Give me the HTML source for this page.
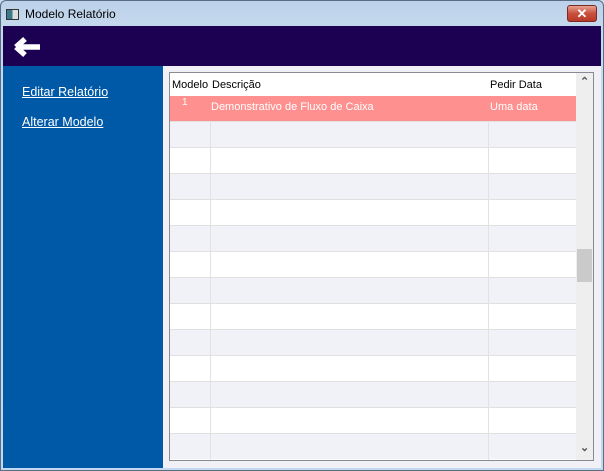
<!DOCTYPE html><html><head><style>
body{margin:0;width:604px;height:471px;position:relative;overflow:hidden;background:#c9dcf0;font-family:"Liberation Sans",sans-serif}
div{position:absolute;box-sizing:border-box}
.t{font-size:11px}
</style></head><body>
<div style="left:0;top:0;width:604px;height:471px;border:1px solid #5a6d84;border-radius:6px 6px 0 0;background:linear-gradient(#bcd2ea,#c6d9ee 30px,#c3d8ee)"></div>
<div style="left:6px;top:9px;width:13px;height:11px;border:1px solid #333;background:linear-gradient(90deg,#3a7a8a 50%,#ddd 50%)"></div>
<div style="left:25px;top:7px;font-size:12px;color:#000">Modelo Relatório</div>
<div style="left:567px;top:5px;width:30px;height:17px;border:1px solid #7a2a20;border-radius:3px;background:linear-gradient(#e8a090,#c8503c 50%,#b83a28);color:#fff;font-size:13px;font-weight:bold;text-align:center;line-height:15px">✕</div>
<div style="left:3px;top:26px;width:598px;height:40px;background:#1c0052"></div>
<svg style="position:absolute;left:13px;top:36px" width="28" height="22" viewBox="0 0 28 22"><path d="M3 11 L12 3 M3 11 L12 19 M4 11 H27" stroke="#fff" stroke-width="5.5" fill="none"/></svg>
<div style="left:3px;top:66px;width:160px;height:402px;background:#0059a6"></div>
<div style="left:163px;top:66px;width:438px;height:402px;background:#f0f0f6"></div>
<div style="left:22px;top:85px;color:#fff;font-size:12.5px;text-decoration:underline">Editar Relatório</div>
<div style="left:22px;top:115px;color:#fff;font-size:12.5px;text-decoration:underline">Alterar Modelo</div>
<div style="left:169px;top:72px;width:425px;height:389px;border:1px solid #8a8a92;background:#fff;overflow:hidden">
<div class="t" style="left:2px;top:6px">Modelo</div>
<div class="t" style="left:42px;top:6px">Descrição</div>
<div class="t" style="left:320px;top:6px">Pedir Data</div>
<div style="left:0;top:23px;width:406px;height:25px;background:#ff9090"></div>
<div class="t" style="left:12px;top:24px;color:#fff;font-size:10px">1</div>
<div class="t" style="left:41px;top:28px;color:#fff">Demonstrativo de Fluxo de Caixa</div>
<div class="t" style="left:320px;top:28px;color:#fff">Uma data</div>
<div id="rows"></div>
<div style="left:406px;top:0;width:17px;height:387px;background:#eeeeee"></div>
<div style="left:407px;top:176px;width:15px;height:33px;background:#cacaca"></div>
<div style="left:410px;top:2px;color:#555;font-size:11px;font-weight:bold">&#8963;</div>
<div style="left:410px;top:368px;color:#555;font-size:11px;font-weight:bold">&#8964;</div>
</div>
<script>
var h='';for(var i=0;i<13;i++){var y=48+i*26;h+='<div style="left:0;top:'+y+'px;width:406px;height:26px;background:'+(i%2==0?'#f1f2f7':'#fff')+';border-top:1px solid #e0e0e0"></div>';}
h+='<div style="left:40px;top:48px;width:1px;height:340px;background:#e2e2e2"></div><div style="left:318px;top:48px;width:1px;height:340px;background:#e2e2e2"></div>';
document.getElementById('rows').outerHTML=h;
</script>
</body></html>
